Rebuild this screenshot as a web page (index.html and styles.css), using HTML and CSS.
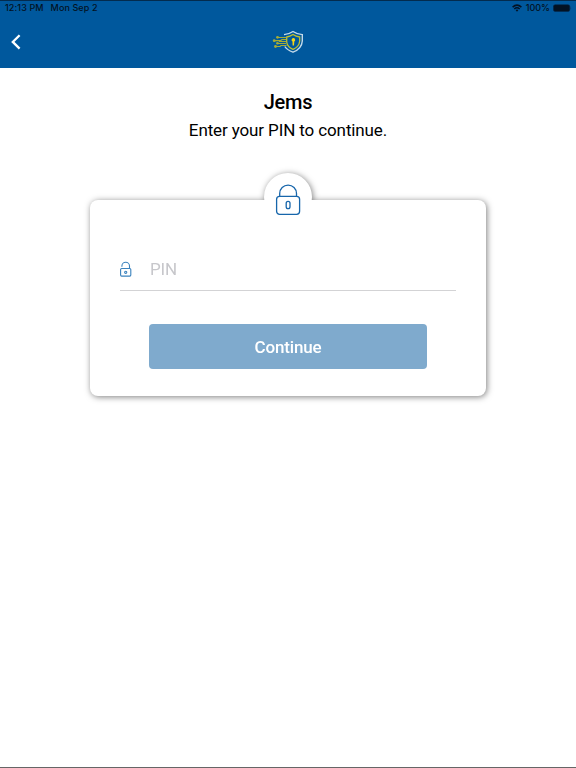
FILE: index.html
```html
<!DOCTYPE html>
<html lang="en">
<head>
    <meta charset="utf-8">
    <meta name="viewport" content="width=device-width">
    <title>Enter PIN</title>
    <link rel="stylesheet" href="styles.css">
</head>
<body>
    <header class="top">
        <div class="status">
            <span class="time">12:13 PM</span>
            <span class="date">Mon Sep 2</span>
            <svg class="wifi" width="10" height="8" viewBox="0 0 10 8" fill="none" stroke="#031223" stroke-width="1.5">
                <path d="M0.6 3.1Q5 -0.9 9.4 3.1M2.3 5Q5 2.6 7.7 5"/>
                <path d="M3.6 6.1Q5 5 6.4 6.1L5 7.7z" fill="#031223" stroke="none"/>
            </svg>
            <span class="percent">100%</span>
            <svg width="19" height="8" viewBox="0 0 19 8">
                <rect x="0.4" y="0.7" width="16.4" height="6.8" rx="1.8" fill="#031223" stroke="#03294d" stroke-width="0.6"/>
                <path d="M17.6 2.9q1 1.2 0 2.4z" fill="#03294d"/>
            </svg>
        </div>
        <nav class="navbar">
            <svg class="back" width="12" height="16" viewBox="0 0 12 16" fill="none" stroke="#fff" stroke-width="2.3">
                <path d="M9.6 1.2L2.8 7.9l6.8 6.7"/>
            </svg>
            <svg class="logo" width="32" height="24" viewBox="0 0 32 24" fill="none">
                <path d="M12 4.6Q17 4.300 21 1.500Q25 4.300 30.300 4.600V11Q29.800 18.800 21 22.200Q15 20 12.800 16.500" stroke="#c3daea" stroke-width="1.400"/>
                <path d="M14.700 7Q18 6.500 21 4.500Q24 6.500 27.700 7V11Q27.200 16.800 21 19.400Q15.300 17 14.700 12z" stroke="#c0c02c" stroke-width="1.300"/>
                <path d="M14.500 7.500H6M14 9.500H10L8.500 10.700H2.500M14 11.500H7M14 13.500H6M14.500 15.500H9L8 16.500H4" stroke="#a5ac35" stroke-width="1.200"/>
                <g fill="#a5ac35">
                    <circle cx="5.500" cy="7.300" r="1.400"/>
                    <circle cx="2.200" cy="10.700" r="1.400"/>
                    <circle cx="5.500" cy="13.300" r="1.300"/>
                    <circle cx="3.500" cy="16.500" r="1.400"/>
                </g>
                <path d="M21.300 8a1.900 1.900 0 0 1 1 3.500L22 15.500h-1.400l-.1-4A1.900 1.900 0 0 1 21.300 8z" fill="#f6d615"/>
            </svg>
        </nav>
    </header>

    <main>
        <h1>Jems</h1>
        <p class="intro">Enter your PIN to continue.</p>

        <form class="card">
            <div class="badge">
                <svg width="26" height="32" viewBox="0 0 26 32" fill="none" stroke="#1766ab" stroke-width="1.3">
                    <rect x="1.600" y="12.300" width="23" height="18" rx="3"/>
                    <path d="M4.700 12.300V9.500a8.400 8.400 0 0 1 16.800 0v2.800"/>
                    <rect x="11.200" y="17.300" width="3.800" height="7.400" rx="1.900"/>
                </svg>
            </div>
            <div class="field">
                <svg width="12" height="16" viewBox="0 0 12 16" fill="none" stroke="#3a82bd" stroke-width="1.1">
                    <rect x="0.600" y="7.500" width="10.200" height="7.600" rx="1"/>
                    <path d="M1.900 5.700V5a3.800 3.800 0 0 1 7.600 0v2.500"/>
                    <circle cx="5.700" cy="11.300" r="1.100"/>
                </svg>
                <input class="pin" type="password" placeholder="PIN">
            </div>
            <button class="continue" type="button">Continue</button>
        </form>
    </main>
</body>
</html>
```

FILE: styles.css
```css
body {
    margin: 0;
    height: 768px;
    box-sizing: border-box;
    border-bottom: 1px solid #666;
    background-color: #fff;
    color: #000;
    font-family: Roboto, sans-serif;
    overflow: hidden;
}

.top {
    height: 68px;
    box-sizing: border-box;
    border-top: 1px solid #032b4e;
    background-color: #00589d;
}

.status {
    display: flex;
    align-items: center;
    height: 14px;
    padding: 0 4px 0 5px;
    color: #031223;
    font: 500 9px/14px Inter, sans-serif;
    letter-spacing: 0.1px;
}

.date {
    margin-left: 7px;
}

.wifi {
    margin-left: auto;
}

.percent {
    margin: 0 3px 0 4px;
    letter-spacing: 0;
}

.navbar {
    display: grid;
    grid-template-columns: 1fr 32px 1fr;
    align-items: center;
    height: 53px;
}

.back {
    margin-left: 10px;
}

main {
    display: flex;
    flex-direction: column;
    align-items: center;
}

h1 {
    margin: 22px 0 0;
    font-size: 20px;
    line-height: 24px;
    font-weight: 500;
    letter-spacing: -0.2px;
}

.intro {
    margin: 6px 0 0;
    font-size: 17px;
    line-height: 20px;
    letter-spacing: -0.12px;
}

.card {
    position: relative;
    display: flex;
    flex-direction: column;
    align-items: center;
    width: 396px;
    height: 196px;
    margin-top: 60px;
    padding: 48px 30px 0;
    box-sizing: border-box;
    border-radius: 8px;
    background-color: #fff;
    filter: drop-shadow(1px 1px 3px rgba(0, 0, 0, 0.5));
}

/* sits on the top edge of the card */
.badge {
    position: absolute;
    top: -27px;
    left: 174px;
    display: flex;
    justify-content: center;
    width: 48px;
    height: 48px;
    padding-top: 11px;
    box-sizing: border-box;
    border-radius: 50%;
    background-color: #fff;
}

.field {
    display: flex;
    align-items: center;
    width: 100%;
    height: 43px;
    box-sizing: border-box;
    border-bottom: 1px solid #d3d3d5;
}

.pin {
    flex: 1;
    min-width: 0;
    margin-left: 18px;
    padding: 0;
    border: 0;
    outline: 0;
    background: none;
    font: 17px/20px Roboto, sans-serif;
    letter-spacing: -0.2px;
}

.pin::placeholder {
    color: #c7c7cb;
}

.continue {
    width: 278px;
    height: 45px;
    margin-top: 33px;
    padding: 1px 0 0;
    border: 0;
    border-radius: 4px;
    background-color: #7faacd;
    color: #fff;
    font: 500 17px/44px Roboto, sans-serif;
    letter-spacing: -0.15px;
}
```
